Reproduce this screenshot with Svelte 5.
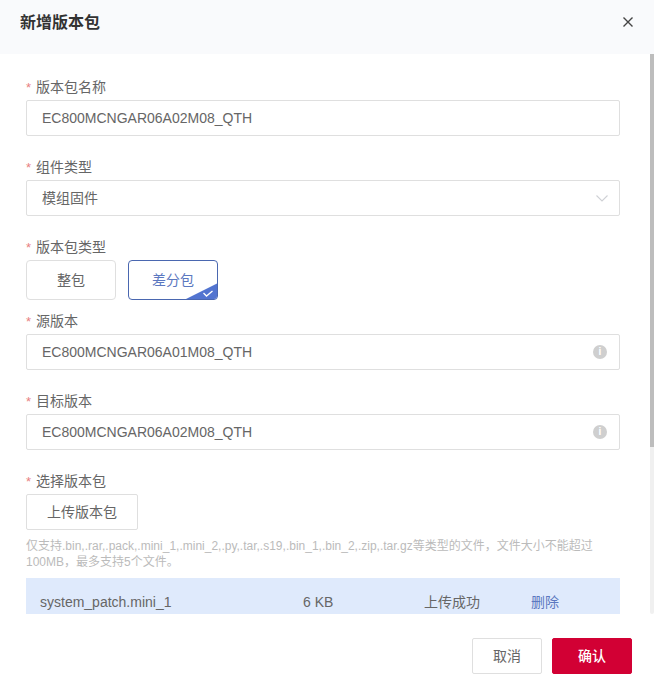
<script>
  const sourceVersion = 'EC800MCNGAR06A01M08_QTH';
  const targetVersion = 'EC800MCNGAR06A02M08_QTH';
</script>

<div class="modal">
  <header class="head">
    <h1>新增版本包</h1>
    <svg class="close" viewBox="0 0 10 10" width="10" height="10"><path d="M.5 .5l9 9M9.500 .5l-9 9" stroke="#444" stroke-width="1.400" fill="none"/></svg>
  </header>

  <div class="scroller">
    <div class="body">
      <div class="field">
        <div class="label"><i>*</i>版本包名称</div>
        <div class="input">{targetVersion}</div>
      </div>

      <div class="field">
        <div class="label"><i>*</i>组件类型</div>
        <div class="input">
          <span class="cjk">模组固件</span>
          <svg class="chev" viewBox="0 0 12 7" width="12" height="7"><path d="M.5 .5L6 6l5.500-5.500" stroke="#cfd1d5" stroke-width="1.100" fill="none"/></svg>
        </div>
      </div>

      <div class="field tight">
        <div class="label"><i>*</i>版本包类型</div>
        <div class="radios">
          <div class="radio"><span class="cjk">整包</span></div>
          <div class="radio on">
            <span class="cjk">差分包</span>
            <svg class="corner" viewBox="0 0 34 17" width="34" height="17">
              <path d="M34 0V13a4 4 0 0 1-4 4H0Z" fill="#5274d0"/>
              <path d="M19.500 10l3 3 6-5" stroke="#fff" stroke-width="1.300" fill="none"/>
            </svg>
          </div>
        </div>
      </div>

      <div class="field">
        <div class="label"><i>*</i>源版本</div>
        <div class="input">
          <span>{sourceVersion}</span>
          <span class="info">i</span>
        </div>
      </div>

      <div class="field">
        <div class="label"><i>*</i>目标版本</div>
        <div class="input">
          <span>{targetVersion}</span>
          <span class="info">i</span>
        </div>
      </div>

      <div class="field last">
        <div class="label"><i>*</i>选择版本包</div>
        <div class="upload"><span class="cjk">上传版本包</span></div>
        <p class="hint">仅支持.bin,.rar,.pack,.mini_1,.mini_2,.py,.tar,.s19,.bin_1,.bin_2,.zip,.tar.gz等类型的文件，文件大小不能超过100MB，最多支持5个文件。</p>
        <div class="file">
          <span class="name">system_patch.mini_1</span>
          <span class="size">6 KB</span>
          <span class="status cjk">上传成功</span>
          <span class="del cjk">删除</span>
        </div>
      </div>
    </div>
    <div class="track"><div class="thumb"></div></div>
  </div>

  <footer class="foot">
    <div class="btn"><span class="cjk">取消</span></div>
    <div class="btn primary"><span class="cjk">确认</span></div>
  </footer>
</div>

<style>
  :global(body) {
    margin: 0;
    background: #fff;
  }
  .modal {
    width: 654px;
    height: 696px;
    display: flex;
    flex-direction: column;
    overflow: hidden;
    font-family: "Liberation Sans", "Noto Sans CJK SC", sans-serif;
    font-size: 14px;
    color: #666;
    background: #fff;
  }
  .head {
    height: 54px;
    flex: none;
    box-sizing: border-box;
    padding: 0 21px 10px 20px;
    display: flex;
    align-items: center;
    justify-content: space-between;
    background: #f9fafc;
  }
  h1 {
    margin: 0 0 -2px;
    font-size: 16px;
    font-weight: 700;
    color: #333;
    line-height: 22px;
  }
  .scroller {
    position: relative;
    flex: none;
    height: 560px;
    overflow: hidden;
  }
  .body {
    box-sizing: border-box;
    height: 100%;
    padding: 20px 34px 0 26px;
    overflow: hidden;
  }
  .track {
    position: absolute;
    top: 0;
    right: 0;
    bottom: 0;
    width: 4px;
    background: #f0f0f0;
    border-radius: 0 0 2px 2px;
  }
  .thumb {
    height: 393px;
    background: #bdbdbd;
  }
  .field {
    margin-bottom: 18px;
  }
  .field.tight {
    margin-bottom: 8px;
  }
  .field.last {
    margin-bottom: 0;
  }
  .label {
    height: 26px;
    line-height: 26px;
    color: #666;
  }
  .label i {
    font-style: normal;
    color: #e8807f;
    margin-right: 5px;
    font-size: 13px;
  }
  .cjk {
    position: relative;
    top: -1px;
  }
  .input {
    height: 36px;
    box-sizing: border-box;
    border: 1px solid #dfdfdf;
    border-radius: 2px;
    padding: 0 11px 0 15px;
    display: flex;
    align-items: center;
    justify-content: space-between;
    color: #666;
  }
  .input .info {
    margin-right: 1px;
  }
  .info {
    width: 14px;
    height: 14px;
    border-radius: 50%;
    background: #cfcfcf;
    color: #fff;
    font-size: 10px;
    font-weight: 700;
    line-height: 14px;
    text-align: center;
  }
  .radios {
    display: flex;
    gap: 12px;
  }
  .radio {
    position: relative;
    width: 90px;
    height: 40px;
    box-sizing: border-box;
    border: 1px solid #dfdfdf;
    border-radius: 4px;
    display: flex;
    align-items: center;
    justify-content: center;
    color: #666;
  }
  .radio.on {
    border-color: #4a67b0;
    color: #5c78c0;
    overflow: hidden;
  }
  .corner {
    position: absolute;
    right: -1px;
    bottom: -1px;
  }
  .upload {
    width: 112px;
    height: 36px;
    box-sizing: border-box;
    border: 1px solid #dfdfdf;
    border-radius: 2px;
    display: flex;
    align-items: center;
    justify-content: center;
    color: #666;
  }
  .hint {
    margin: 8px 0;
    font-size: 12px;
    line-height: 16px;
    color: #bbb;
  }
  .file {
    height: 48px;
    background: #dfeafc;
    display: flex;
    align-items: center;
    color: #666;
  }
  .name {
    margin-left: 14px;
    width: 263px;
  }
  .size {
    width: 121px;
  }
  .status {
    width: 107px;
  }
  .del {
    color: #5c78c0;
  }
  .foot {
    flex: 1;
    display: flex;
    justify-content: flex-end;
    gap: 10px;
    padding: 24px 22px 0 0;
  }
  .btn {
    width: 70px;
    height: 36px;
    box-sizing: border-box;
    border: 1px solid #dfdfdf;
    border-radius: 2px;
    display: flex;
    align-items: center;
    justify-content: center;
    color: #666;
  }
  .btn.primary {
    width: 80px;
    border-color: #d20034;
    background: #d20034;
    color: #fff;
    font-weight: 500;
  }
</style>
